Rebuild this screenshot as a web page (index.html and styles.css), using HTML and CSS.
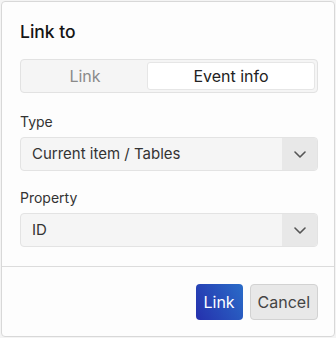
FILE: index.html
```html
<html>
    <head>
        <title>Link to</title>
        <link rel="stylesheet" href="styles.css">
    </head>
    <body>
        <div class="dialog">
            <div class="body">
                <h2 class="title">Link to</h2>
                <div class="tabs">
                    <button class="tab">Link</button>
                    <button class="tab active">Event info</button>
                </div>

                <label class="label">Type</label>
                <div class="select">
                    <span class="value">Current item / Tables</span>
                    <span class="arrow">
                        <svg width="12" height="7" viewBox="0 0 12 7"><path d="M1 1l5 5 5-5" fill="none" stroke="#555" stroke-width="1.6" stroke-linecap="round" stroke-linejoin="round"/></svg>
                    </span>
                </div>

                <label class="label second">Property</label>
                <div class="select">
                    <span class="value">ID</span>
                    <span class="arrow">
                        <svg width="12" height="7" viewBox="0 0 12 7"><path d="M1 1l5 5 5-5" fill="none" stroke="#555" stroke-width="1.6" stroke-linecap="round" stroke-linejoin="round"/></svg>
                    </span>
                </div>
            </div>

            <div class="footer">
                <button class="btn primary">Link</button>
                <button class="btn">Cancel</button>
            </div>
        </div>
    </body>
</html>
```

FILE: styles.css
```css
body {
    margin: 0;
    padding: 1px;
    background-color: #f4f4f4;
    font-family: Inter, "Noto Sans", sans-serif;
}
.dialog {
    box-sizing: border-box;
    width: 334px;
    height: 336px;
    background-color: #fdfdfd;
    border: 1px solid #d8d8d8;
    border-radius: 4px;
    display: flex;
    flex-direction: column;
}
.body {
    padding: 20px 16px 19px 18px;
    border-bottom: 1px solid #dcdcdc;
}
.title {
    margin: 0;
    font-size: 17.5px;
    line-height: 20px;
    font-weight: 500;
    color: #151515;
}
.tabs {
    box-sizing: border-box;
    margin-top: 17px;
    height: 34px;
    padding: 2px;
    display: flex;
    background-color: #f5f5f5;
    border: 1px solid #e2e2e2;
    border-radius: 4px;
}
.tab {
    flex: auto;
    border: 1px solid transparent;
    background: none;
    font-family: inherit;
    font-size: 16px;
    color: #8a8a8a;
    border-radius: 3px;
    padding: 0;
}
.tab.active {
    background-color: #fff;
    border-color: #e6e6e6;
    color: #222;
}
.label {
    display: block;
    margin-top: 19px;
    margin-bottom: 5px;
    font-size: 14px;
    line-height: 20px;
    color: #333;
}
.label.second {
    margin-top: 17px;
}
.select {
    box-sizing: border-box;
    height: 34px;
    display: flex;
    background-color: #f5f5f5;
    border: 1px solid #e3e3e3;
    border-radius: 4px;
    overflow: hidden;
}
.value {
    flex: 1;
    padding-left: 11px;
    font-size: 15px;
    line-height: 32px;
    color: #333;
}
.arrow {
    width: 35px;
    display: flex;
    align-items: center;
    justify-content: center;
    background-color: #e8e8e8;
}
.footer {
    padding: 17px 16px 0 0;
    display: flex;
    justify-content: flex-end;
    gap: 7px;
}
.btn {
    box-sizing: border-box;
    height: 36px;
    padding: 0 7px;
    font-family: inherit;
    font-size: 16px;
    color: #444;
    background-color: #e8e8e8;
    border: 1px solid #d2d2d2;
    border-radius: 4px;
}
.btn.primary {
    width: 47px;
    color: #fff;
    border: none;
    background: linear-gradient(60deg, #2530ad, #2a6cc8);
}
```
